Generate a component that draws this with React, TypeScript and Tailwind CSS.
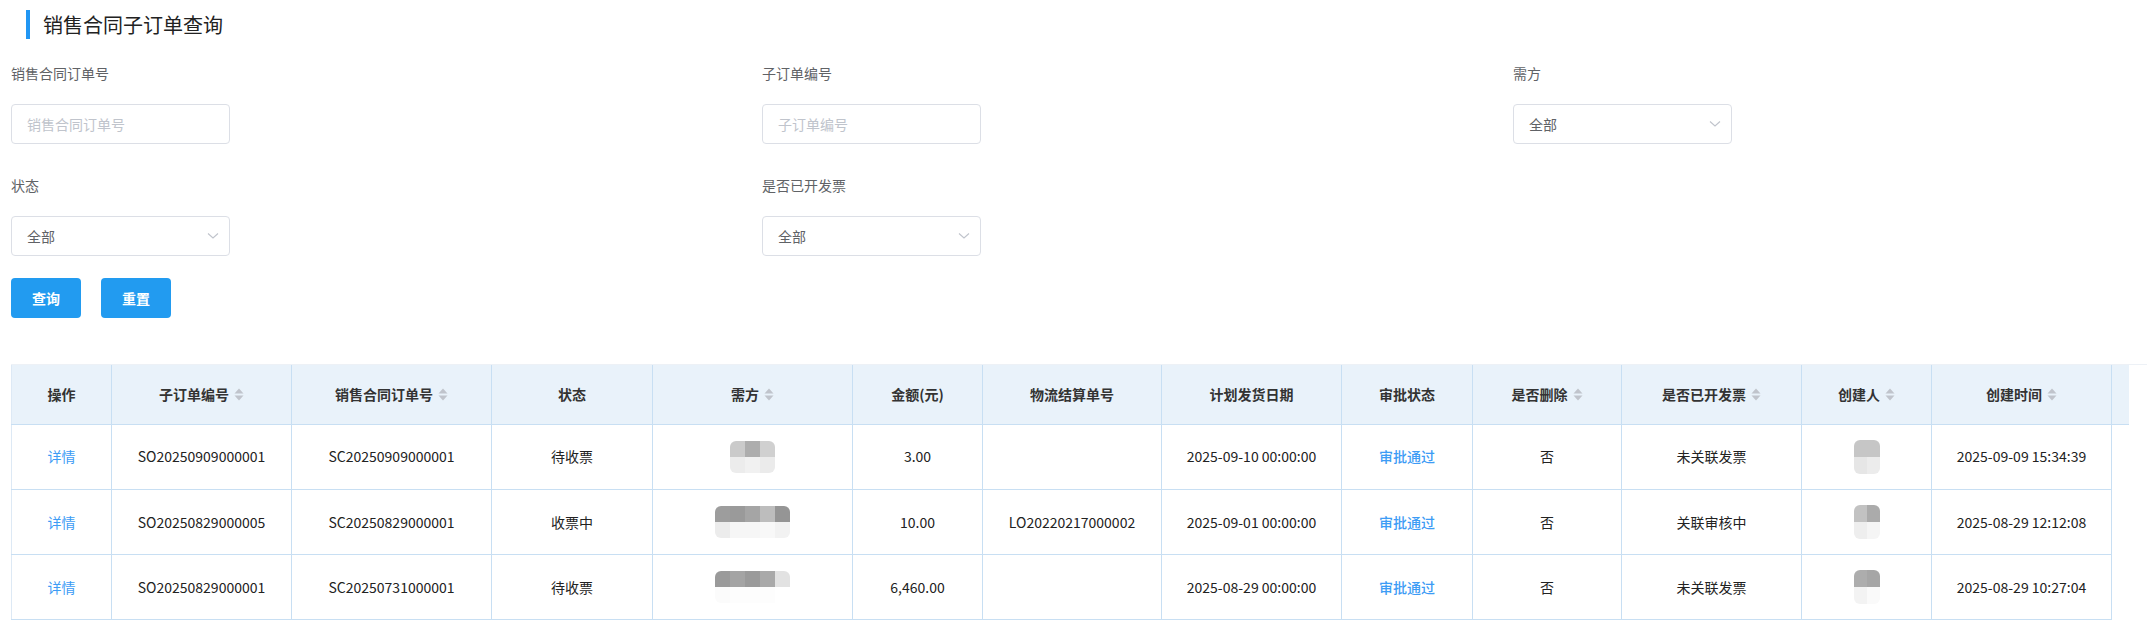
import React from "react";

type Col = { t: string; sort?: boolean; cls: string };

const cols: Col[] = [
  { t: "操作", cls: "w-[100px]" },
  { t: "子订单编号", sort: true, cls: "w-[180px]" },
  { t: "销售合同订单号", sort: true, cls: "w-[200px]" },
  { t: "状态", cls: "w-[161px]" },
  { t: "需方", sort: true, cls: "w-[200px]" },
  { t: "金额(元)", cls: "w-[130px]" },
  { t: "物流结算单号", cls: "w-[179px]" },
  { t: "计划发货日期", cls: "w-[180px]" },
  { t: "审批状态", cls: "w-[131px]" },
  { t: "是否删除", sort: true, cls: "w-[149px]" },
  { t: "是否已开发票", sort: true, cls: "w-[180px]" },
  { t: "创建人", sort: true, cls: "w-[130px]" },
  { t: "创建时间", sort: true, cls: "w-[180px]" },
];

type Row = {
  sub: string;
  sc: string;
  status: string;
  buyer: { top: string[]; bottom: string[] };
  amount: string;
  lo: string;
  plan: string;
  del: string;
  inv: string;
  creator: { top: string[]; bottom: string[] };
  created: string;
};

const rows: Row[] = [
  {
    sub: "SO20250909000001",
    sc: "SC20250909000001",
    status: "待收票",
    buyer: { top: ["#cacaca", "#adadad", "#d0d0d0"], bottom: ["#ececec", "#f1f1f1", "#ebebeb"] },
    amount: "3.00",
    lo: "",
    plan: "2025-09-10 00:00:00",
    del: "否",
    inv: "未关联发票",
    creator: { top: ["#c6c6c6", "#c6c6c6"], bottom: ["#e6e6e6", "#ececec"] },
    created: "2025-09-09 15:34:39",
  },
  {
    sub: "SO20250829000005",
    sc: "SC20250829000001",
    status: "收票中",
    buyer: {
      top: ["#9d9d9d", "#9a9a9a", "#a5a5a5", "#bdbdbd", "#959595"],
      bottom: ["#ececec", "#f6f6f6", "#f6f6f6", "#f8f8f8", "#f2f2f2"],
    },
    amount: "10.00",
    lo: "LO20220217000002",
    plan: "2025-09-01 00:00:00",
    del: "否",
    inv: "关联审核中",
    creator: { top: ["#c2c2c2", "#ababab"], bottom: ["#eeeeee", "#f5f5f5"] },
    created: "2025-08-29 12:12:08",
  },
  {
    sub: "SO20250829000001",
    sc: "SC20250731000001",
    status: "待收票",
    buyer: {
      top: ["#9a9a9a", "#a4a4a4", "#9a9a9a", "#a9a9a9", "#e2e2e2"],
      bottom: ["#fbfbfb", "#fdfdfd", "#fdfdfd", "#fdfdfd", "#ffffff"],
    },
    amount: "6,460.00",
    lo: "",
    plan: "2025-08-29 00:00:00",
    del: "否",
    inv: "未关联发票",
    creator: { top: ["#adadad", "#a6a6a6"], bottom: ["#f3f3f3", "#fafafa"] },
    created: "2025-08-29 10:27:04",
  },
];

function SortIcon() {
  return (
    <svg width="10" height="15" viewBox="0 0 10 15" className="ml-[5px] shrink-0">
      <polygon points="0.5,6.5 5,1.5 9.5,6.5" fill="#c0c4cc" />
      <polygon points="0.5,8.5 5,13.5 9.5,8.5" fill="#c0c4cc" />
    </svg>
  );
}

function Chevron() {
  return (
    <svg width="12" height="8" viewBox="0 0 12 8" className="shrink-0">
      <polyline points="1,1.5 6,6 11,1.5" fill="none" stroke="#c0c4cc" strokeWidth="1.1" />
    </svg>
  );
}

function Pixels({ top, bottom, w }: { top: string[]; bottom: string[]; w: "b" | "c" }) {
  const cell = w === "b" ? "w-[15px] h-[16px]" : "w-[13px] h-[17px]";
  return (
    <div className="inline-flex flex-col overflow-hidden rounded-[6px] align-middle blur-[0.4px]">
      <div className="flex">
        {top.map((c, i) => (
          <div key={i} className={cell} style={{ background: c }} />
        ))}
      </div>
      <div className="flex">
        {bottom.map((c, i) => (
          <div key={i} className={cell} style={{ background: c }} />
        ))}
      </div>
    </div>
  );
}

function Label({ children }: { children: React.ReactNode }) {
  return <div className="text-[14px] leading-[22px] text-[#606266]">{children}</div>;
}

function Input({ placeholder }: { placeholder: string }) {
  return (
    <div className="mt-[20px] flex h-[40px] w-[219px] items-center rounded-[4px] border border-[#dcdfe6] bg-white px-[15px] text-[14px] text-[#c0c4cc]">
      {placeholder}
    </div>
  );
}

function Select() {
  return (
    <div className="mt-[20px] flex h-[40px] w-[219px] items-center justify-between rounded-[4px] border border-[#dcdfe6] bg-white pl-[15px] pr-[10px] text-[14px] text-[#606266]">
      <span>全部</span>
      <Chevron />
    </div>
  );
}

const td = "border-r border-b border-[#c8dff3] text-center align-middle p-0";

export default function App() {
  return (
    <div className="min-h-[623px] w-[2147px] overflow-hidden bg-white font-['Noto_Sans_CJK_SC','Microsoft_YaHei',sans-serif] text-[#333]">
      <div className="ml-[26px] mt-[10px] h-[29px] border-l-4 border-[#2196f3] pl-[13px] text-[20px] leading-[29px] text-[#222]">
        销售合同子订单查询
      </div>

      <div className="px-[11px]">
        <div className="mt-[23px] grid grid-cols-[751px_751px_500px]">
          <div>
            <Label>销售合同订单号</Label>
            <Input placeholder="销售合同订单号" />
          </div>
          <div>
            <Label>子订单编号</Label>
            <Input placeholder="子订单编号" />
          </div>
          <div>
            <Label>需方</Label>
            <Select />
          </div>
        </div>
        <div className="mt-[30px] grid grid-cols-[751px_751px_500px]">
          <div>
            <Label>状态</Label>
            <Select />
          </div>
          <div>
            <Label>是否已开发票</Label>
            <Select />
          </div>
        </div>
        <div className="mt-[22px] flex gap-[20px]">
          <button className="h-[40px] w-[70px] rounded-[4px] bg-[#229bf0] text-[14px] font-bold text-white">
            查询
          </button>
          <button className="h-[40px] w-[70px] rounded-[4px] bg-[#229bf0] text-[14px] font-bold text-white">
            重置
          </button>
        </div>
      </div>

      <div className="ml-[11px] mt-[46px] border-t border-[#edf1f6]">
        <table className="table-fixed border-collapse bg-[#e9f2fa]">
          <colgroup>
            {cols.map((c, i) => (
              <col key={i} className={c.cls} />
            ))}
            <col className="w-[17px]" />
          </colgroup>
          <thead>
            <tr className="h-[59px]">
              {cols.map((c, i) => (
                <th
                  key={i}
                  className={`${td} text-[14px] font-bold text-[#333] ${i === 0 ? "border-l border-l-[#dde9f5]" : ""}`}
                >
                  <div className="flex items-center justify-center">
                    <span>{c.t}</span>
                    {c.sort && <SortIcon />}
                  </div>
                </th>
              ))}
              <th className="border-b border-[#c8dff3] p-0" />
            </tr>
          </thead>
        </table>
        <table className="table-fixed border-collapse">
          <colgroup>
            {cols.map((c, i) => (
              <col key={i} className={c.cls} />
            ))}
          </colgroup>
          <tbody className="text-[14px] text-[#222]">
            {rows.map((r, i) => (
              <tr key={i} className="h-[65px]">
                <td className={`${td} border-l border-l-[#dde9f5] text-[#3d9cf5]`}>详情</td>
                <td className={td}>{r.sub}</td>
                <td className={td}>{r.sc}</td>
                <td className={td}>{r.status}</td>
                <td className={td}>
                  <Pixels top={r.buyer.top} bottom={r.buyer.bottom} w="b" />
                </td>
                <td className={td}>{r.amount}</td>
                <td className={td}>{r.lo}</td>
                <td className={td}>{r.plan}</td>
                <td className={`${td} font-medium text-[#3d9cf5]`}>审批通过</td>
                <td className={td}>{r.del}</td>
                <td className={td}>{r.inv}</td>
                <td className={td}>
                  <Pixels top={r.creator.top} bottom={r.creator.bottom} w="c" />
                </td>
                <td className={td}>{r.created}</td>
              </tr>
            ))}
          </tbody>
        </table>
      </div>
    </div>
  );
}
